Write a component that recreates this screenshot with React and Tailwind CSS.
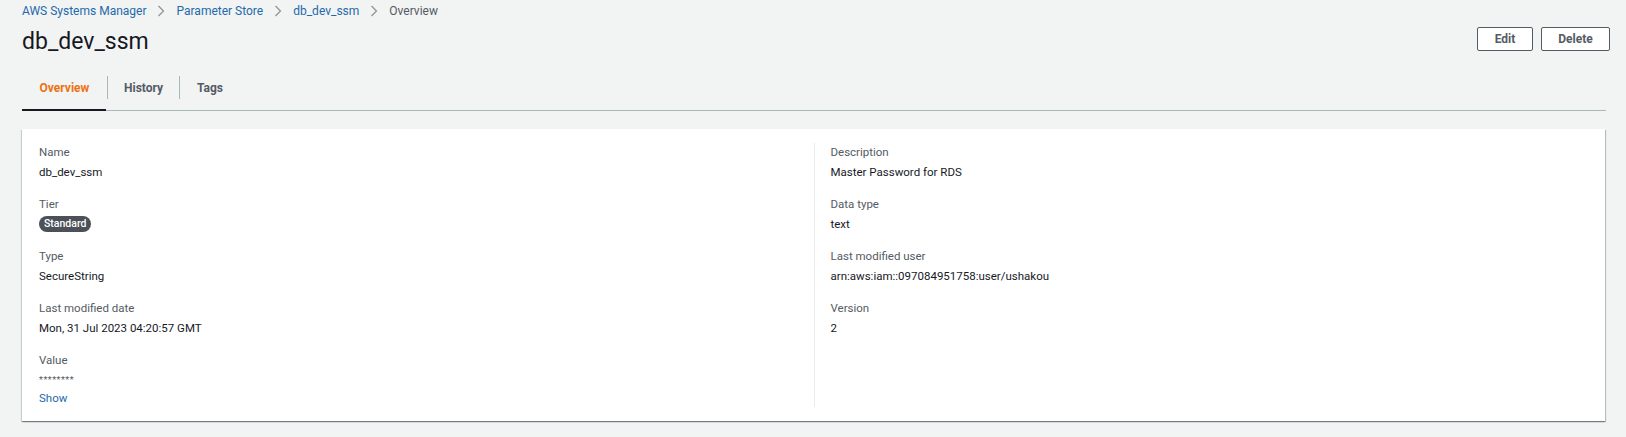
import React from "react";

const Chevron = () => (
  <svg width="8" height="12" viewBox="0 0 8 12" className="mx-[11px] shrink-0">
    <path d="M1.5 1 L6.5 6 L1.5 11" fill="none" stroke="#879596" strokeWidth="1.2" />
  </svg>
);

const Field = ({ label, children }) => (
  <div className="flex flex-col">
    <div className="text-[11.5px] leading-[18px] text-[#545b64]">{label}</div>
    <div className="mt-[2px] text-[11.5px] leading-[18px] text-[#16191f]">{children}</div>
  </div>
);

export default function App() {
  return (
    <div
      className="min-h-[437px] w-full bg-[#f2f3f3] pl-[22px] pr-[16px] pt-[2px]"
      style={{ fontFamily: "Roboto, 'Open Sans', Arial, sans-serif" }}
    >
      {/* Breadcrumbs */}
      <div className="flex h-[18px] items-center text-[12px] leading-[18px]">
        <span className="text-[#1f6aab]">AWS Systems Manager</span>
        <Chevron />
        <span className="text-[#1f6aab]">Parameter Store</span>
        <Chevron />
        <span className="text-[#1f6aab]">db_dev_ssm</span>
        <Chevron />
        <span className="text-[#545b64]">Overview</span>
      </div>

      {/* Header */}
      <div className="mt-[7px] flex h-[24px] items-start justify-between">
        <h1 className="mt-[1px] text-[23px] font-normal leading-[28px] text-[#16191f]">db_dev_ssm</h1>
        <div className="flex gap-[8px]">
          <button className="h-[24px] w-[56px] rounded-[2px] border border-[#545b64] bg-white text-[12px] font-bold text-[#545b64]">
            Edit
          </button>
          <button className="h-[24px] w-[69px] rounded-[2px] border border-[#545b64] bg-white text-[12px] font-bold text-[#545b64]">
            Delete
          </button>
        </div>
      </div>

      {/* Tabs */}
      <div className="mt-[14px] mr-[4px] flex border-b border-[#aab7b8]">
        <div className="relative flex h-[45px] w-[85px] items-center justify-center text-[12px] font-bold text-[#ec7211]">
          Overview
          <div className="absolute bottom-[-1px] left-0 right-[1px] h-[2px] bg-[#16191f]" />
        </div>
        <div className="my-[11px] w-px bg-[#aab7b8]" />
        <div className="flex h-[45px] w-[71px] items-center justify-center text-[12px] font-bold text-[#545b64]">
          History
        </div>
        <div className="my-[11px] w-px bg-[#aab7b8]" />
        <div className="flex h-[45px] w-[60px] items-center justify-center text-[12px] font-bold text-[#545b64]">
          Tags
        </div>
      </div>

      {/* Card */}
      <div className="mt-[18px] mr-[5px] bg-white px-[17px] pt-[14px] pb-[14px] shadow-[0_1px_1px_0_rgba(0,28,36,0.35),1px_1px_1px_0_rgba(0,28,36,0.2),-1px_1px_1px_0_rgba(0,28,36,0.12)]">
        <div className="grid grid-cols-2">
          <div className="flex flex-col gap-[14px] pr-[17px]">
            <Field label="Name">db_dev_ssm</Field>
            <div className="flex flex-col">
              <div className="text-[11.5px] leading-[18px] text-[#545b64]">Tier</div>
              <div className="mt-[3px] flex h-[17px] items-start">
                <span className="inline-flex h-[16px] items-center rounded-full bg-[#4b5059] px-[5px] text-[10.5px] font-medium text-white">
                  Standard
                </span>
              </div>
            </div>
            <Field label="Type">SecureString</Field>
            <Field label="Last modified date">Mon, 31 Jul 2023 04:20:57 GMT</Field>
            <div className="flex flex-col">
              <div className="text-[11.5px] leading-[18px] text-[#545b64]">Value</div>
              <div className="mt-[2px] text-[9px] leading-[18px] tracking-[0.5px] text-[#545b64]">********</div>
              <div className="text-[11.5px] leading-[18px] text-[#1f6aab]">Show</div>
            </div>
          </div>
          <div className="flex flex-col gap-[14px] border-l border-[#eaeded] pl-[16px]">
            <Field label="Description">Master Password for RDS</Field>
            <Field label="Data type">text</Field>
            <Field label="Last modified user">arn:aws:iam::097084951758:user/ushakou</Field>
            <Field label="Version">2</Field>
          </div>
        </div>
      </div>
    </div>
  );
}
